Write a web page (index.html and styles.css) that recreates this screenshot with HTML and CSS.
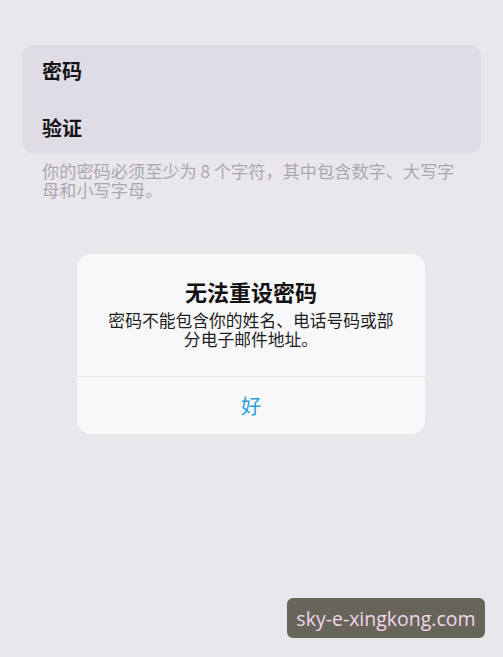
FILE: index.html
```html
<!DOCTYPE html>
<html lang="zh-CN">
<head>
<meta charset="utf-8">
<title>无法重设密码</title>
<link rel="stylesheet" href="styles.css">
</head>
<body>
<div class="screen">
  <div class="card">
    <div class="row row-first"><span class="label">密码</span></div>
    <div class="row row-second"><span class="label">验证</span></div>
  </div>
  <p class="hint">你的密码必须至少为 8 个字符，其中包含数字、大写字母和小写字母。</p>

  <div class="alert">
    <div class="alert-body">
      <div class="alert-title">无法重设密码</div>
      <div class="alert-msg">密码不能包含你的姓名、电话号码或部分电子邮件地址。</div>
    </div>
    <div class="alert-action">好</div>
  </div>

  <div class="watermark">sky-e-xingkong.com</div>
</div>
</body>
</html>
```
FILE: styles.css
```css
html, body {
  margin: 0;
  padding: 0;
}
body {
  background: #e9e7ec;
  font-family: "Noto Sans CJK SC", "Noto Sans", sans-serif;
  width: 503px;
  height: 657px;
  overflow: hidden;
}
.screen {
  position: relative;
  width: 503px;
  height: 657px;
  padding-top: 45px;
  box-sizing: border-box;
  display: flex;
  flex-direction: column;
}
.card {
  margin: 0 22px;
  background: #dfdce6;
  border-radius: 11px;
  display: flex;
  flex-direction: column;
}
.row {
  display: flex;
  align-items: center;
  padding-left: 20px;
  box-sizing: border-box;
}
.row-first {
  height: 52px;
}
.row-second {
  height: 56px;
  padding-top: 5px;
}
.label {
  font-size: 20px;
  font-weight: 700;
  color: #141414;
  line-height: 1;
}
.hint {
  margin: 8px 0 0;
  padding: 0 46px 0 42px;
  font-size: 17.2px;
  line-height: 19px;
  color: #aaa8ae;
}
.alert {
  margin: 55px 0 0 77px;
  width: 348px;
  height: 180px;
  background: #f8f8fa;
  border-radius: 14px;
  display: flex;
  flex-direction: column;
}
.alert-body {
  padding: 23px 26px 0;
  height: 123px;
  box-sizing: border-box;
  border-bottom: 1px solid #e8e6e4;
  text-align: center;
}
.alert-title {
  font-size: 22px;
  font-weight: 700;
  line-height: 28px;
  color: #121212;
}
.alert-msg {
  margin-top: 6px;
  font-size: 16.8px;
  line-height: 19px;
  color: #1e1e1e;
}
.alert-action {
  flex: 1;
  display: flex;
  align-items: center;
  justify-content: center;
  font-size: 20px;
  color: #2a9ed8;
}
.watermark {
  position: absolute;
  left: 287px;
  top: 598px;
  width: 198px;
  height: 40px;
  background: #67655a;
  border-radius: 6px;
  color: #f4d6ec;
  font-family: "Open Sans", "Noto Sans", sans-serif;
  font-size: 19.5px;
  display: flex;
  align-items: center;
  justify-content: center;
}
```
